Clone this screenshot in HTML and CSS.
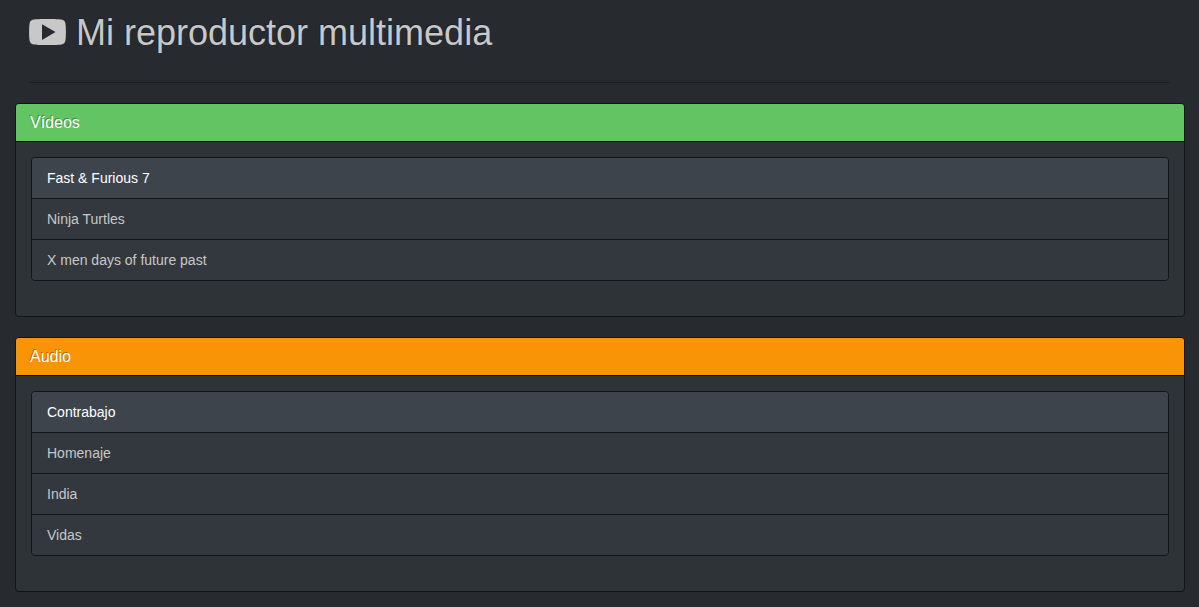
FILE: index.html
```html
<!DOCTYPE html>
<html lang="es">
<head>
<meta charset="utf-8">
<title>Mi reproductor multimedia</title>
<link rel="stylesheet" href="styles.css">
</head>
<body>
<main class="container">
  <header class="page-header">
    <h1 class="page-title"><svg class="logo" viewBox="0 0 37 26" aria-hidden="true"><path fill="currentColor" fill-rule="evenodd" d="M18.500 0C11 0 7 .2 4.500 .6C2.300 .9 1 2.200 .6 4.200C-.1 8 -.1 18 .6 21.800C1 23.800 2.300 25.100 4.500 25.400C7 25.800 11 26 18.500 26S30 25.800 32.500 25.400C34.700 25.100 36 23.800 36.400 21.800C37.100 18 37.100 8 36.400 4.200C36 2.200 34.700 .9 32.500 .6C30 .2 26 0 18.500 0ZM13 5.200L26.500 13L13 21Z"/></svg> Mi reproductor multimedia</h1>
  </header>
  <section class="panel">
    <h2 class="panel-heading panel-success">Vídeos</h2>
    <div class="panel-body">
      <div class="list-group">
        <a class="list-item active" href="#">Fast &amp; Furious 7</a>
        <a class="list-item" href="#">Ninja Turtles</a>
        <a class="list-item" href="#">X men days of future past</a>
      </div>
    </div>
  </section>
  <section class="panel">
    <h2 class="panel-heading panel-warning">Audio</h2>
    <div class="panel-body">
      <div class="list-group">
        <a class="list-item active" href="#">Contrabajo</a>
        <a class="list-item" href="#">Homenaje</a>
        <a class="list-item" href="#">India</a>
        <a class="list-item" href="#">Vidas</a>
      </div>
    </div>
  </section>
</main>
</body>
</html>
```

FILE: styles.css
```css
* { box-sizing: border-box; }

body {
  margin: 0;
  background: #272b30;
  color: #c8c8c8;
  font: 14px/20px "Liberation Sans", Arial, sans-serif;
}

.container { padding: 12px 14px 0 15px; }

.page-header {
  margin: 0 15px 20px 14px;
  padding-bottom: 29px;
  border-bottom: 1px solid #1c1e22;
}

.page-title {
  margin: 0;
  font-size: 36px;
  line-height: 41px;
  font-weight: 400;
  text-shadow: -1px -1px 0 rgba(0, 0, 0, 0.3);
}

.logo {
  width: 37px;
  height: 26px;
}

.panel {
  margin-bottom: 20px;
  background: #2e3338;
  border: 1px solid #121416;
  border-radius: 4px;
}

.panel-heading {
  margin: 0;
  padding: 9px 14px 8px;
  border-bottom: 1px solid #050505;
  border-radius: 3px 3px 0 0;
  color: #fff;
  font-size: 16px;
  line-height: 20px;
  font-weight: 400;
  text-shadow: -1px -1px 0 rgba(0, 0, 0, 0.3);
}

.panel-success { background: #62c462; }
.panel-warning { background: #f89406; }

.panel-body { padding: 15px; }

.list-group {
  margin-bottom: 20px;
  border: 1px solid #121416;
  border-radius: 4px;
  overflow: hidden;
}

.list-item {
  display: block;
  padding: 10px 15px;
  background: #32383e;
  color: #c8c8c8;
  text-decoration: none;
}

.list-item + .list-item { border-top: 1px solid #121416; }

.list-item.active {
  background: #3e444c;
  color: #fff;
}
```
